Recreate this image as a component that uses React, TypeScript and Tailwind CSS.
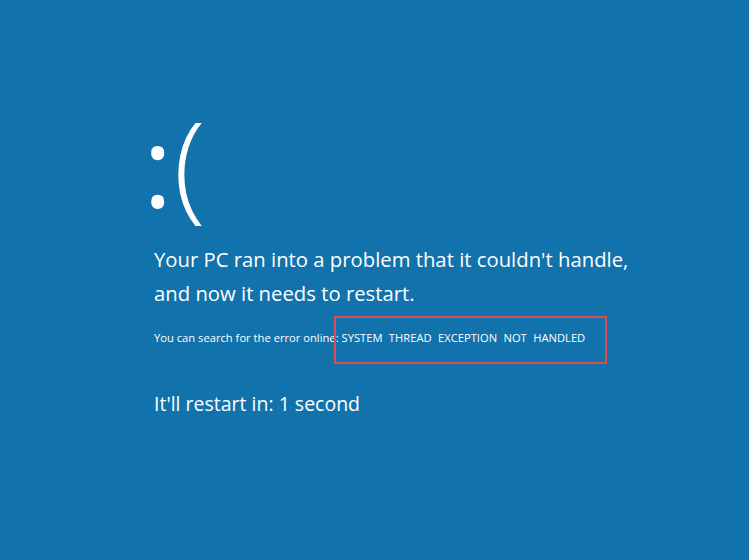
const App = () => {
  return (
    <div className="w-[749px] h-[560px] bg-[#1272ac] text-white font-['Open_Sans',sans-serif] pl-[154px] pt-[97px] overflow-hidden">
      <div className="-ml-[11px] leading-[130px] h-[125px]">
        <span className="text-[112px] font-normal">:</span>
        <span className="text-[118px] font-light ml-[1px]">(</span>
      </div>
      <div className="mt-[20px] text-[20.3px] leading-[34px]">
        Your PC ran into a problem that it couldn't handle,
        <br />
        and now it needs to restart.
      </div>
      <div className="relative mt-[20px] text-[11.2px] leading-[15px]">
        You can search for the error online:{" "}
        <span className="[word-spacing:3.5px]">SYSTEM THREAD EXCEPTION NOT HANDLED</span>
        <div className="absolute left-[180px] top-[-14px] w-[273px] h-[48px] border-2 border-[#e14a4f]" />
      </div>
      <div className="mt-[46px] text-[19.5px] leading-[26px]">It'll restart in: 1 second</div>
    </div>
  );
};

export default App;
